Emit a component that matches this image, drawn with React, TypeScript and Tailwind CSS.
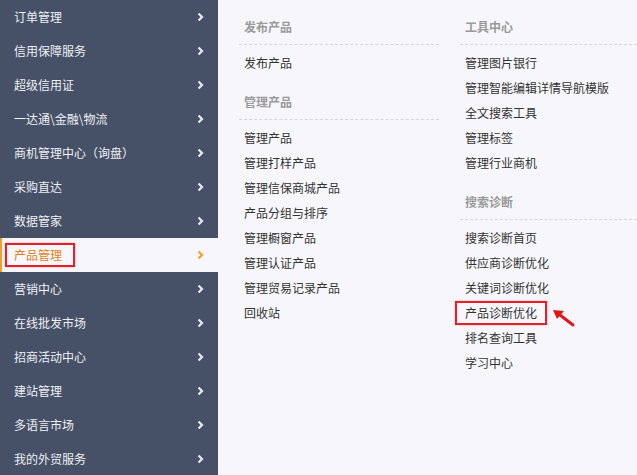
import React from "react";

const sideItems = [
  "订单管理",
  "信用保障服务",
  "超级信用证",
  "一达通\\金融\\物流",
  "商机管理中心（询盘）",
  "采购直达",
  "数据管家",
  "产品管理",
  "营销中心",
  "在线批发市场",
  "招商活动中心",
  "建站管理",
  "多语言市场",
  "我的外贸服务",
];

const ACTIVE = "产品管理";

function Chevron({ active }: { active?: boolean }) {
  return (
    <svg width="7" height="10" viewBox="0 0 7 10" className="shrink-0">
      <polyline
        points="1.5,1.5 5,5 1.5,8.5"
        fill="none"
        stroke={active ? "#f0a030" : "#e6e9f0"}
        strokeWidth="2.2"
      />
    </svg>
  );
}

function Arrow() {
  return (
    <svg width="26" height="22" viewBox="0 0 26 22" className="absolute left-[92px] top-[8px]">
      <line x1="21" y1="17" x2="8" y2="7" stroke="#e0161c" strokeWidth="3" strokeLinecap="round" />
      <polygon points="1,2 12,3 5,11" fill="#e0161c" />
    </svg>
  );
}

function Section({
  title,
  items,
  first,
  highlight,
}: {
  title: string;
  items: string[];
  first?: boolean;
  highlight?: string;
}) {
  return (
    <div className={first ? "" : "mt-[17px]"}>
      <div className="h-[28px] border-b border-dashed border-[#d6d7de] pl-[5px] leading-[20px] font-bold text-[#9a9a9a]">
        {title}
      </div>
      <div className="mt-[5px]">
        {items.map((it) =>
          it === highlight ? (
            <div key={it} className="relative h-[25px] pl-[5px] flex items-center">
              <span className="-ml-[10px] h-[24px] border-2 border-[#e0232a] pl-[8px] pr-[8px] leading-[20px] text-[#333] shadow-[0_0_2px_#f3a0a0]">
                {it}
              </span>
              <Arrow />
            </div>
          ) : (
            <div key={it} className="h-[25px] pl-[5px] leading-[25px] text-[#333]">
              {it}
            </div>
          )
        )}
      </div>
    </div>
  );
}

export default function App() {
  return (
    <div
      className="w-[637px] h-[475px] flex overflow-hidden text-[12px]"
      style={{ fontFamily: '"Noto Sans CJK SC", "Noto Sans", sans-serif' }}
    >
      <div className="w-[218px] shrink-0 bg-[#465167]">
        {sideItems.map((label) =>
          label === ACTIVE ? (
            <div
              key={label}
              className="h-[34px] flex items-center justify-between bg-[#f7f7fb] border-l-2 border-[#f0a030] pl-[3px] pr-[14px]"
            >
              <span className="h-[24px] border-2 border-[#e0232a] pl-[7px] pr-[11px] leading-[20px] text-[#e0801a] shadow-[0_0_2px_#f3a0a0]">
                {label}
              </span>
              <Chevron active />
            </div>
          ) : (
            <div key={label} className="h-[34px] flex items-center justify-between pl-[14px] pr-[14px] text-[#eef0f4]">
              <span>{label}</span>
              <Chevron />
            </div>
          )
        )}
      </div>
      <div className="flex-1 bg-[#f7f7fb] pl-[21px] pt-[17px] flex gap-[21px]">
        <div className="w-[200px] shrink-0">
          <Section title="发布产品" items={["发布产品"]} first />
          <Section
            title="管理产品"
            items={[
              "管理产品",
              "管理打样产品",
              "管理信保商城产品",
              "产品分组与排序",
              "管理橱窗产品",
              "管理认证产品",
              "管理贸易记录产品",
              "回收站",
            ]}
          />
        </div>
        <div className="flex-1">
          <Section
            title="工具中心"
            items={["管理图片银行", "管理智能编辑详情导航模版", "全文搜索工具", "管理标签", "管理行业商机"]}
            first
          />
          <Section
            title="搜索诊断"
            items={["搜索诊断首页", "供应商诊断优化", "关键词诊断优化", "产品诊断优化", "排名查询工具", "学习中心"]}
            highlight="产品诊断优化"
          />
        </div>
      </div>
    </div>
  );
}
